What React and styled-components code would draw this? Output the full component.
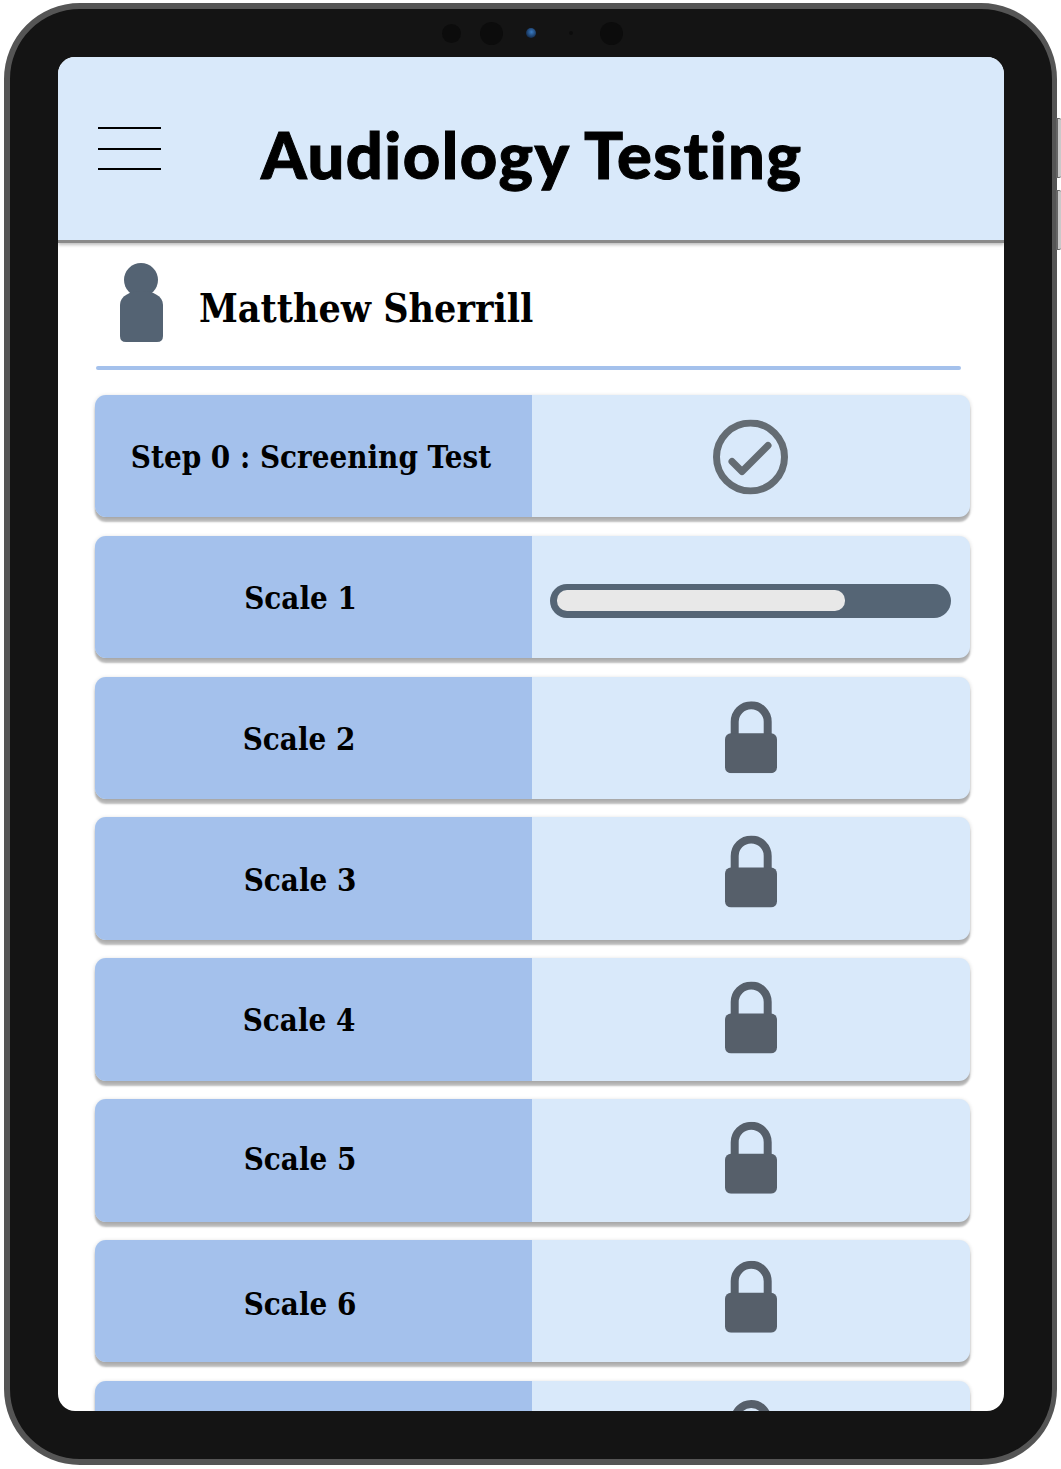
import React from 'react';
import styled, { createGlobalStyle } from 'styled-components';

const GlobalStyle = createGlobalStyle`
	html, body {
		margin: 0;
		padding: 0;
		background: #fff;
		overflow: hidden;
	}
`;

const Page = styled.div`
	width: 1061px;
	height: 1469px;
	padding: 3px 4px;
	box-sizing: border-box;
`;

const Device = styled.div`
	position: relative;
	width: 1053px;
	height: 1462px;
	box-sizing: border-box;
	display: flex;
	flex-direction: column;
	padding: 0 48px 48px;
	background: #141414;
	border: 6px solid #555;
	border-right-width: 5px;
	border-radius: 76px;
`;

const SideButton = styled.div`
	position: absolute;
	left: calc(100% + 4px);
	top: ${(p) => p.$top}px;
	width: 5px;
	height: 60px;
	box-sizing: border-box;
	background: #c9c9c9;
	border: 1px solid #666;
	border-left-width: 2px;
	border-right: none;
	border-radius: 0 2px 2px 0;
`;

const CameraBar = styled.div`
	height: 48px;
	flex-shrink: 0;
	display: flex;
	align-items: center;
	justify-content: center;
	box-sizing: border-box;
`;

const CameraSlot = styled.div`
	width: 40px;
	display: flex;
	justify-content: center;
`;

const Lens = styled.div`
	width: ${(p) => p.$size}px;
	height: ${(p) => p.$size}px;
	border-radius: 50%;
	background: ${(p) => p.$bg || '#0c0c0c'};
`;

const Screen = styled.main`
	flex: 1;
	min-height: 0;
	overflow: hidden;
	display: flex;
	flex-direction: column;
	background: #fff;
	border-radius: 17px;
`;

const Header = styled.header`
	height: 186px;
	flex-shrink: 0;
	box-sizing: border-box;
	display: flex;
	align-items: center;
	padding-left: 40px;
	gap: 100px;
	background: #d9e9fa;
	border-bottom: 3px solid #8a8a8a;
	box-shadow: 0 2px 3px rgba(0, 0, 0, 0.25);
`;

const Burger = styled.div`
	width: 63px;
	height: 43px;
	display: flex;
	flex-direction: column;
	justify-content: space-between;
	span {
		display: block;
		height: 2px;
		background: #000;
	}
`;

const Title = styled.h1`
	margin: 12px 0 0;
	color: #000;
	font-family: 'Lato', sans-serif;
	font-size: 65px;
	font-weight: 900;
	line-height: 1;
	letter-spacing: 1.5px;
	font-variant-ligatures: none;
	white-space: nowrap;
	-webkit-text-stroke: 1px #000;
`;

const UserRow = styled.div`
	height: 123px;
	flex-shrink: 0;
	box-sizing: border-box;
	display: flex;
	align-items: center;
	gap: 36px;
	padding: 0 0 5px 62px;
`;

const UserName = styled.div`
	color: #000;
	font-family: 'DejaVu Serif', serif;
	font-stretch: condensed;
	font-size: 39px;
	font-weight: 700;
	white-space: nowrap;
	padding-top: 11px;
`;

const Divider = styled.div`
	height: 4px;
	margin: 0 43px 24.8px 38px;
	flex-shrink: 0;
	background: #a4c1ec;
	border-radius: 2px;
`;

const List = styled.div`
	display: flex;
	flex-direction: column;
	gap: 18.36px;
	padding: 0 34px 0 37px;
`;

const Row = styled.div`
	height: 122.5px;
	flex-shrink: 0;
	display: grid;
	grid-template-columns: 437px 1fr;
	overflow: hidden;
	border-radius: 11px;
	background: #d9e9fa;
	box-shadow: 0 5px 2px rgba(0, 0, 0, 0.26), 0 1px 4px rgba(0, 0, 0, 0.18);
`;

const Label = styled.div`
	display: flex;
	align-items: center;
	justify-content: center;
	box-sizing: border-box;
	padding-right: ${(p) => p.$inset}px;
	background: #a4c1ec;
	color: #000;
	font-family: 'DejaVu Serif', serif;
	font-stretch: condensed;
	font-size: 31px;
	font-weight: 700;
	white-space: nowrap;
	span {
		transform: translateY(${(p) => p.$shift + 1}px);
	}
`;

const Status = styled.div`
	display: flex;
	align-items: center;
	justify-content: center;
	svg {
		display: block;
		transform: translate(${(p) => p.$nudge || 0}px, ${(p) => p.$shift}px);
	}
`;

const Track = styled.div`
	width: 401px;
	height: 34px;
	box-sizing: border-box;
	padding: 6px 7px;
	margin: 8px 0 0 -1px;
	background: #556575;
	border-radius: 17px;
`;

const Fill = styled.div`
	height: 21px;
	background: #e8e8e8;
	border-radius: 10px;
`;

const PersonIcon = () => (
	<svg width="43" height="79" viewBox="0 0 43 79">
		<circle cx="21" cy="17" r="17" fill="#546373" />
		<path
			d="M21.5 28C10 28 0 33 0 42V73Q0 79 6 79H37Q43 79 43 73V42C43 33 33 28 21.5 28Z"
			fill="#546373"
		/>
	</svg>
);

const CheckIcon = () => (
	<svg width="75" height="75" viewBox="0 0 75 75">
		<circle cx="37.5" cy="37.5" r="34" fill="none" stroke="#646c73" strokeWidth="7" />
		<path
			d="M19 42L29 52L55 26"
			fill="none"
			stroke="#646c73"
			strokeWidth="7"
			strokeLinecap="round"
			strokeLinejoin="round"
		/>
	</svg>
);

const LockIcon = () => (
	<svg width="52" height="72" viewBox="0 0 52 72">
		<path d="M9.7 34V20.5a16.5 16.5 0 0 1 33 0V34" fill="none" stroke="#565f6a" strokeWidth="8" />
		<rect x="0" y="32" width="52" height="40" rx="6" fill="#565f6a" />
	</svg>
);

// the last row is cut by the bottom of the screen, only its lock shows
const rows = [
	{ id: 0, label: 'Step 0 : Screening Test', inset: 5, textShift: 0, kind: 'done', shift: 0 },
	{ id: 1, label: 'Scale 1', inset: 26, textShift: 0, kind: 'progress', shift: 0 },
	{ id: 2, label: 'Scale 2', inset: 29, textShift: 0, kind: 'locked', shift: -0.75 },
	{ id: 3, label: 'Scale 3', inset: 27, textShift: 0, kind: 'locked', shift: -7.6 },
	{ id: 4, label: 'Scale 4', inset: 29, textShift: 0, kind: 'locked', shift: -1.45 },
	{ id: 5, label: 'Scale 5', inset: 27, textShift: -2, kind: 'locked', shift: -2.35 },
	{ id: 6, label: 'Scale 6', inset: 27, textShift: 2, kind: 'locked', shift: -4.2 },
	{ id: 7, label: '', inset: 27, textShift: 0, kind: 'locked', shift: -6 },
];

function RowStatus({ kind, shift }) {
	if (kind === 'done') {
		return (
			<Status $shift={0.45} $nudge={-1}>
				<CheckIcon />
			</Status>
		);
	}
	if (kind === 'progress') {
		return (
			<Status $shift={0}>
				<Track>
					<Fill style={{ width: '74.5%' }} />
				</Track>
			</Status>
		);
	}
	return (
		<Status $shift={shift}>
			<LockIcon />
		</Status>
	);
}

export default function App() {
	return (
		<Page>
			<GlobalStyle />
			<Device>
				<SideButton $top={109} />
				<SideButton $top={181} />
				<CameraBar>
					<CameraSlot><Lens $size={19} /></CameraSlot>
					<CameraSlot><Lens $size={23} /></CameraSlot>
					<CameraSlot><Lens $size={10} $bg="radial-gradient(circle at 55% 40%, #3a7cc4, #12294a 75%)" /></CameraSlot>
					<CameraSlot><Lens $size={4} /></CameraSlot>
					<CameraSlot><Lens $size={23} /></CameraSlot>
				</CameraBar>
				<Screen>
					<Header>
						<Burger>
							<span />
							<span />
							<span />
						</Burger>
						<Title>Audiology Testing</Title>
					</Header>
					<UserRow>
						<PersonIcon />
						<UserName>Matthew Sherrill</UserName>
					</UserRow>
					<Divider />
					<List>
						{rows.map((row) => (
							<Row key={row.id}>
								<Label $inset={row.inset} $shift={row.textShift}>
									<span>{row.label}</span>
								</Label>
								<RowStatus kind={row.kind} shift={row.shift} />
							</Row>
						))}
					</List>
				</Screen>
			</Device>
		</Page>
	);
}
